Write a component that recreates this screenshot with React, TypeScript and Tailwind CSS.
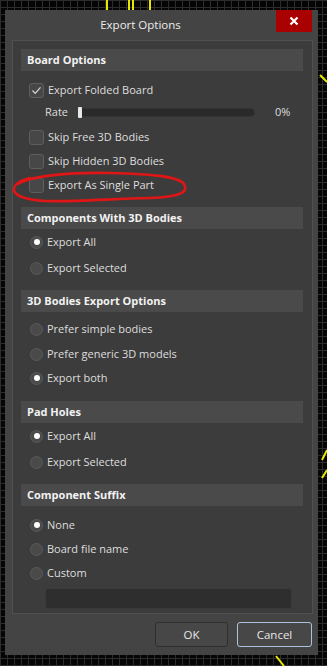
import React from 'react';

const font = { fontFamily: '"Open Sans", "Noto Sans", sans-serif' };

function Header({ label, mt }: { label: string; mt: string }) {
  return (
    <div className={`${mt} h-[22px] w-[282px] bg-[#4a4a4a] flex items-center pl-[6px] text-[11px] font-bold text-[#f2f2f2]`}>
      {label}
    </div>
  );
}

function Check({ label, checked, mt = '' }: { label: string; checked?: boolean; mt?: string }) {
  return (
    <div className={`${mt} h-[24px] flex items-center pl-[8px] gap-[4px]`}>
      <div className="w-[15px] h-[15px] rounded-[3px] border border-[#5e5e5e] bg-[#474747] flex items-center justify-center">
        {checked && (
          <svg width="11" height="11" viewBox="0 0 11 11">
            <path d="M1.5 5.5 L4.2 8.3 L9.5 2.3" fill="none" stroke="#d8d8d8" strokeWidth="1.2" />
          </svg>
        )}
      </div>
      <span className="text-[11px] text-[#dedede]">{label}</span>
    </div>
  );
}

function Radio({ label, on, mt = '' }: { label: string; on?: boolean; mt?: string }) {
  return (
    <div className={`${mt} h-[24px] flex items-center pl-[9px] gap-[4px]`}>
      <div className="w-[13px] h-[13px] rounded-full border border-[#5a5a5a] bg-[#4a4a4a] flex items-center justify-center">
        {on && <div className="w-[6px] h-[6px] rounded-full bg-white" />}
      </div>
      <span className="text-[11px] text-[#dedede]">{label}</span>
    </div>
  );
}

export default function App() {
  return (
    <div
      className="relative w-[327px] h-[666px] overflow-hidden bg-[#050505] bg-[linear-gradient(to_right,#2c2c2c_1px,transparent_1px),linear-gradient(to_bottom,#2c2c2c_1px,transparent_1px)] bg-[size:7px_7px] pl-[5px] pt-[10px]"
      style={font}
    >
      {/* yellow traces behind the dialog */}
      <svg className="absolute left-0 top-0" width="327" height="666">
        <path d="M107 0 V12 M129 0 V12 M133 0 V12 M150 0 V12" stroke="#e6e600" strokeWidth="2" />
        <path d="M320 75 L327 82 M322 460 L327 450 M322 478 L327 470 M276 656 L284 666" stroke="#e6e600" strokeWidth="2" />
      </svg>

      <div className="relative w-[313px] h-[645px] bg-[#444444] flex flex-col">
        {/* Title bar */}
        <div className="h-[30px] flex">
          <div className="flex-1 flex items-center justify-center text-[11.5px] text-[#ececec]">Export Options</div>
          <button className="w-[36px] h-[22px] mr-[6px] bg-[#a90000] flex items-center justify-center">
            <svg width="10" height="10" viewBox="0 0 10 10">
              <path d="M1.5 1.5 L8.5 8.5 M8.5 1.5 L1.5 8.5" stroke="#fff" strokeWidth="2.2" />
            </svg>
          </button>
        </div>

        {/* Inner panel */}
        <div className="ml-[7px] mr-[5px] h-[574px] border border-[#505050] bg-[#3c3c3c] flex flex-col pl-[8px]">
          <Header label="Board Options" mt="mt-[8px]" />
          <Check label="Export Folded Board" checked mt="mt-[7px]" />
          <div className="h-[20px] flex items-center pl-[24px]">
            <span className="text-[11px] text-[#dedede] w-[33px]">Rate</span>
            <div className="relative w-[177px] h-[9px] rounded-full bg-[#2a2a2a] border border-[#333]">
              <div className="absolute left-[-1px] top-[-2px] w-[4px] h-[11px] rounded-[1px] bg-[#e8e8e8]" />
            </div>
            <span className="ml-[20px] text-[11px] text-[#dedede]">0%</span>
          </div>
          <Check label="Skip Free 3D Bodies" mt="mt-[3px]" />
          <Check label="Skip Hidden 3D Bodies" />
          <Check label="Export As Single Part" />

          <Header label="Components With 3D Bodies" mt="mt-[10px]" />
          <Radio label="Export All" on mt="mt-[1px]" />
          <Radio label="Export Selected" mt="mt-[2px]" />

          <Header label="3D Bodies Export Options" mt="mt-[10px]" />
          <Radio label="Prefer simple bodies" mt="mt-[5px]" />
          <Radio label="Prefer generic 3D models" mt="mt-[1px]" />
          <Radio label="Export both" on />

          <Header label="Pad Holes" mt="mt-[11px]" />
          <Radio label="Export All" on mt="mt-[1px]" />
          <Radio label="Export Selected" mt="mt-[2px]" />

          <Header label="Component Suffix" mt="mt-[10px]" />
          <Radio label="None" on mt="mt-[7px]" />
          <Radio label="Board file name" />
          <Radio label="Custom" />
          <div className="mt-[3px] ml-[24px] w-[247px] h-[21px] rounded-[3px] bg-[#2e2e2e] border border-[#3a3a3a]" />
        </div>

        {/* Footer buttons */}
        <div className="flex justify-end gap-[9px] mt-[8px] mr-[6px]">
          <button className="w-[73px] h-[25px] rounded-[3px] bg-[#474747] border border-[#2e2e2e] text-[11.5px] text-[#e6e6e6]">OK</button>
          <button className="w-[75px] h-[25px] rounded-[3px] bg-[#474747] border border-[#a9c4dc] text-[11.5px] text-[#e6e6e6]">Cancel</button>
        </div>
      </div>

      {/* red hand-drawn highlight */}
      <svg className="absolute left-0 top-0 pointer-events-none" width="327" height="666">
        <path
          d="M18 184 C30 176 70 172 110 173 C150 174 178 176 184 184 C189 192 180 197 150 198 C110 199 70 202 45 201 C25 200 12 195 14 188 C15 183 22 180 30 178"
          fill="none"
          stroke="#e01515"
          strokeWidth="2.6"
          strokeLinecap="round"
        />
      </svg>
    </div>
  );
}
